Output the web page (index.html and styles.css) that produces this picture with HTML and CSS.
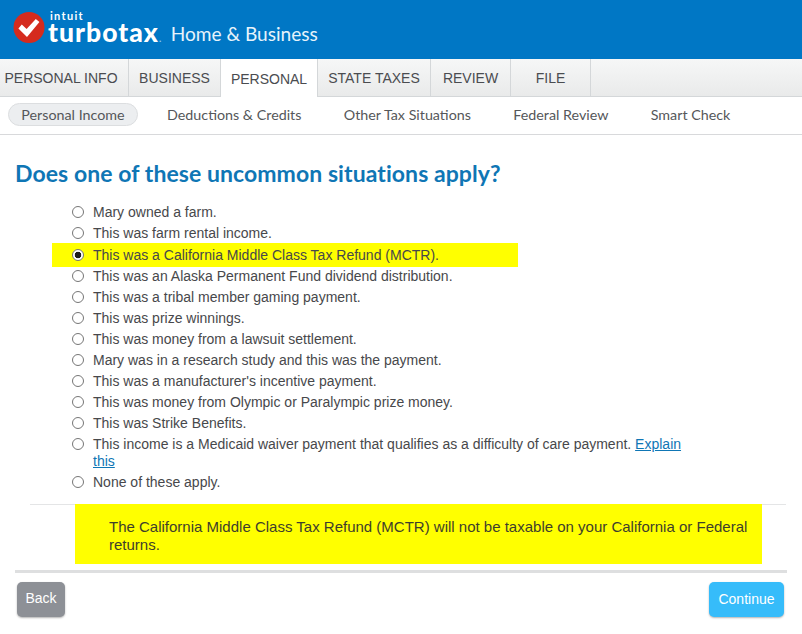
FILE: index.html
```html
<!DOCTYPE html>
<html lang="en">
<head>
<meta charset="utf-8">
<title>TurboTax Home &amp; Business</title>
<link rel="stylesheet" href="styles.css">
</head>
<body>
<header class="brand">
  <svg class="logo" width="32" height="33" viewBox="0 0 32 33" aria-hidden="true">
    <circle cx="16" cy="16.5" r="15.5" fill="#d52b1e"/>
    <path d="M5.4 17.4L8.8 13.6 13.6 18 22.8 8 26.4 11 14 26z" fill="#fff"/>
  </svg>
  <div class="wordmark">
    <span class="intuit">intuit</span>
    <span class="turbotax">turbotax<span class="dot">.</span></span>
  </div>
  <span class="edition">Home &amp; Business</span>
</header>
<nav class="tabs">
  <a class="tab tab-info">PERSONAL INFO</a>
  <a class="tab tab-business">BUSINESS</a>
  <a class="tab tab-personal active">PERSONAL</a>
  <a class="tab tab-state">STATE TAXES</a>
  <a class="tab tab-review">REVIEW</a>
  <a class="tab tab-file">FILE</a>
</nav>
<nav class="subnav">
  <a class="pill">Personal Income</a>
  <a class="sub">Deductions &amp; Credits</a>
  <a class="sub">Other Tax Situations</a>
  <a class="sub">Federal Review</a>
  <a class="sub">Smart Check</a>
</nav>
<main class="content">
  <h1 class="title">Does one of these uncommon situations apply?</h1>
  <ul class="options">
    <li class="option"><span class="radio"></span><span>Mary owned a farm.</span></li>
    <li class="option"><span class="radio"></span><span>This was farm rental income.</span></li>
    <li class="option highlighted"><span class="radio checked"></span><span>This was a California Middle Class Tax Refund (MCTR).</span></li>
    <li class="option"><span class="radio"></span><span>This was an Alaska Permanent Fund dividend distribution.</span></li>
    <li class="option"><span class="radio"></span><span>This was a tribal member gaming payment.</span></li>
    <li class="option"><span class="radio"></span><span>This was prize winnings.</span></li>
    <li class="option"><span class="radio"></span><span>This was money from a lawsuit settlement.</span></li>
    <li class="option"><span class="radio"></span><span>Mary was in a research study and this was the payment.</span></li>
    <li class="option"><span class="radio"></span><span>This was a manufacturer's incentive payment.</span></li>
    <li class="option"><span class="radio"></span><span>This was money from Olympic or Paralympic prize money.</span></li>
    <li class="option"><span class="radio"></span><span>This was Strike Benefits.</span></li>
    <li class="option"><span class="radio"></span><p class="option-text">This income is a Medicaid waiver payment that qualifies as a difficulty of care payment. <a class="link"><span>Explain</span> <span>this</span></a></p></li>
    <li class="option"><span class="radio"></span><span>None of these apply.</span></li>
  </ul>
  <div class="note-wrap">
    <div class="note-rule">
      <p class="note">The California Middle Class Tax Refund (MCTR) will not be taxable on your California or Federal returns.</p>
    </div>
  </div>
  <footer class="actions">
    <button class="btn back">Back</button>
    <button class="btn continue">Continue</button>
  </footer>
</main>
</body>
</html>
```
FILE: styles.css
```css
* { box-sizing: border-box; }
html, body { margin: 0; padding: 0; }
body {
  width: 802px;
  height: 634px;
  overflow: hidden;
  background: #fff;
  font-family: "Liberation Sans", Arial, sans-serif;
  font-size: 14px;
  color: #47484b;
}
.brand {
  height: 59px;
  background: #0077c5;
  display: flex;
  align-items: flex-start;
  padding: 11px 0 0 13px;
  color: #fff;
}
.logo { flex: none; }
.wordmark {
  display: flex;
  flex-direction: column;
  margin-left: 3px;
  font-family: Lato, sans-serif;
}
.intuit {
  font-size: 11px;
  line-height: 9px;
  font-weight: 700;
  letter-spacing: 1.3px;
  padding-left: 2px;
}
.turbotax {
  font-size: 26.5px;
  line-height: 24px;
  font-weight: 900;
  letter-spacing: 1px;
}
.dot { color: #8ccbf0; font-size: 12px; font-weight: 400; }
.edition {
  font-family: Lato, sans-serif;
  font-size: 19.1px;
  line-height: 24px;
  margin: 11px 0 0 8px;
  color: #e6f3fb;
}
.tabs {
  height: 38px;
  display: flex;
  background: linear-gradient(#f6f7f7, #e9eaea);
  border-bottom: 1px solid #d4d7d9;
}
.tab {
  height: 37px;
  display: flex;
  align-items: center;
  justify-content: center;
  border-right: 1px solid #d4d7d9;
  font-size: 14px;
  color: #4a4c50;
}
.tab-info { width: 129px; padding-right: 6px; }
.tab-business { width: 92px; }
.tab-personal { width: 97px; }
.tab-state { width: 113px; }
.tab-review { width: 80px; }
.tab-file { width: 80px; }
.tab.active { height: 38px; background: #fff; padding-top: 2px; }
.subnav {
  height: 38px;
  display: flex;
  align-items: center;
  padding: 0 0 2px 8px;
  border-bottom: 1px solid #d8d9db;
  font-family: Lato, sans-serif;
  font-size: 14.3px;
  color: #55575a;
}
.pill {
  width: 130px;
  height: 23px;
  line-height: 22px;
  text-align: center;
  background: #eceef0;
  border: 1px solid #dcdee0;
  border-radius: 12px;
  margin-right: 29px;
}
.sub { margin-right: 42.3px; }
.content { padding: 0 15px; }
.title {
  margin: 24px 0 0;
  height: 28px;
  font-family: Lato, sans-serif;
  font-size: 23px;
  line-height: 28px;
  font-weight: 700;
  letter-spacing: 0.07px;
  color: #0f76b5;
}
.options {
  list-style: none;
  margin: 16.36px 0 0;
  padding: 0 0 0 57px;
  width: 680px;
}
.option {
  position: relative;
  display: flex;
  align-items: flex-start;
  line-height: 18px;
  padding: 0 4px 3.1px 0;
}
.option-text { margin: 0.3px 0 -0.3px; line-height: 17.5px; }
.radio {
  flex: none;
  width: 12px;
  height: 12px;
  margin: 3px 9px 0 0;
  border: 1px solid #767676;
  border-radius: 50%;
  background: #fff;
}
.radio.checked {
  background: radial-gradient(circle, #1c1c1c 0 3px, #fff 3.6px);
}
.highlighted { z-index: 0; }
.highlighted::before {
  content: "";
  position: absolute;
  z-index: -1;
  left: -20px;
  top: -3px;
  width: 466px;
  height: 24px;
  background: #ffff00;
}
.link { color: #0f76b5; text-decoration: underline; }
.note-wrap {
  margin-top: 9.5px;
  height: 69px;
  border-bottom: 3px solid #dedfe0;
  padding-left: 15px;
}
.note-rule {
  padding: 0 24px 0 45px;
  margin-right: 1px;
  border-top: 1px solid #e4e5e6;
}
.note {
  margin: -1px 0 0;
  height: 60px;
  padding: 14px 12px 0 34px;
  background: #ffff00;
  font-size: 15px;
  line-height: 17.5px;
  color: #3e3e2c;
}
.actions {
  display: flex;
  justify-content: space-between;
  padding: 9px 3px 0 2px;
}
.btn {
  height: 35px;
  border: 0;
  border-radius: 5px;
  color: #fff;
  font-family: "Liberation Sans", Arial, sans-serif;
  font-size: 14px;
  box-shadow: 0 1px 2px rgba(0,0,0,.3);
}
.back { width: 48px; background: #8d9096; padding-bottom: 4px; }
.continue { width: 75px; background: #36bcfa; padding-bottom: 2px; }
```
